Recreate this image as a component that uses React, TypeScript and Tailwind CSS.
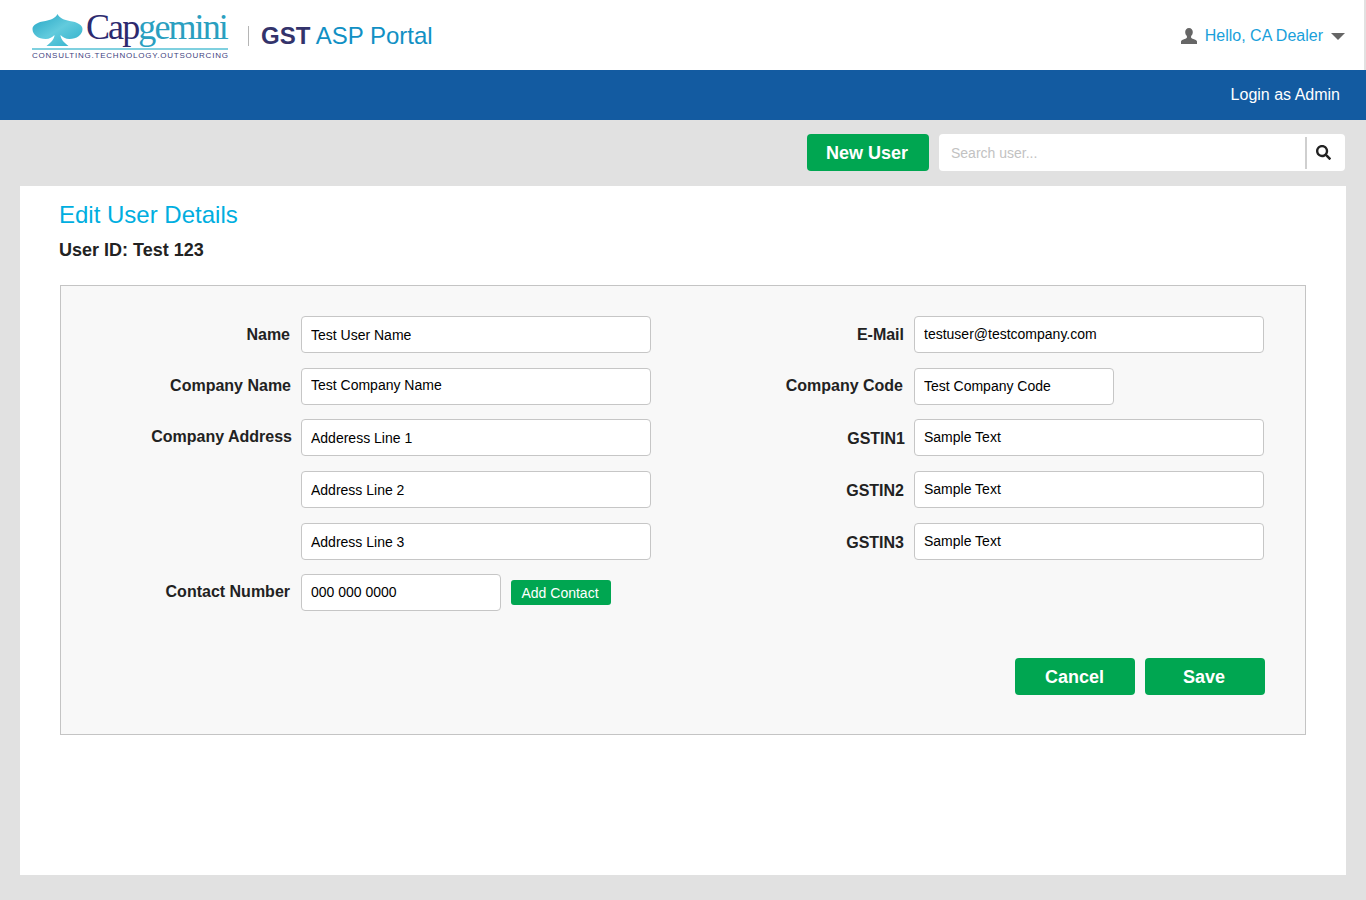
import { FaSearch } from "react-icons/fa";

const FONT = "font-['Liberation_Sans',Arial,sans-serif]";

function Logo() {
  return (
    <div className="flex w-[196px] flex-col pt-[2px]">
      <div className="flex h-[36px] items-end">
        <svg viewBox="0 0 50 32" className="mb-[2px] h-[32px] w-[51px] shrink-0">
          <defs>
            <linearGradient id="spade" x1="0" y1="0" x2="1" y2="1">
              <stop offset="0" stopColor="#23a4c4" />
              <stop offset="0.5" stopColor="#62cbdd" />
              <stop offset="1" stopColor="#2fb0cb" />
            </linearGradient>
          </defs>
          <path
            d="M25 0C27 4 32 6 37 7C45 8 50 11 50 15C50 21 44 25 37 25C33 25 30 23 28 21C28 25 32 29 36 32L14 32C18 29 22 25 22 21C20 23 17 25 13 25C6 25 0 21 0 15C0 11 5 8 13 7C18 6 23 4 25 0Z"
            fill="url(#spade)"
          />
        </svg>
        <div className="mb-[3px] ml-[3px] font-['Liberation_Serif',serif] text-[36px] leading-[36px] tracking-[-1.9px] whitespace-nowrap">
          <span className="text-[#2d2a6f]">Cap</span>
          <span className="text-[#2a9fc0]">gemini</span>
        </div>
      </div>
      <div className="h-[2px] bg-[#7fd0df]" />
      <div className="mt-[1px] text-[8px] leading-[9px] tracking-[0.77px] text-[#3f3f80] whitespace-nowrap">
        CONSULTING.TECHNOLOGY.OUTSOURCING
      </div>
    </div>
  );
}

function Label({ text, className = "" }: { text: string; className?: string }) {
  return (
    <div className="flex h-[37px] items-center justify-end">
      <div className={`text-right text-base font-bold text-[#222] ${className}`}>{text}</div>
    </div>
  );
}

function Field({
  value,
  width = "w-[350px]",
  className = "",
}: {
  value: string;
  width?: string;
  className?: string;
}) {
  return (
    <input
      readOnly
      value={value}
      className={`${width} ${className} ml-[10px] h-[37px] rounded-[4px] border border-[#c6c6c6] bg-white px-[9px] text-sm text-black outline-none`}
    />
  );
}

export default function App() {
  return (
    <div className={`${FONT} min-h-[900px] bg-[#e1e1e1]`}>
      <header className="flex h-[70px] items-center border-r-2 border-[#e1e1e1] bg-white pr-[19px] pl-[32px]">
        <Logo />
        <div className="mt-[2px] mr-[12px] ml-[20px] h-[20px] w-px bg-[#b5b5b5]" />
        <div className="pt-[2px] text-2xl whitespace-nowrap">
          <span className="font-bold text-[#33336b]">GST</span>{" "}
          <span className="text-[#1190c4]">ASP Portal</span>
        </div>
        <div className="ml-auto flex items-center pt-[2px]">
          <svg viewBox="0 0 16 16" className="h-[16px] w-[16px] fill-[#666]">
            <path d="M8 0c2.300 0 3.800 1.700 3.800 4 0 1.800-.8 3.300-1.700 4.100v1.400c0 .6 1 1 2.300 1.500 1.600.6 3.600 1.200 3.600 2.500V16H0v-2.500c0-1.300 2-1.900 3.600-2.500 1.300-.5 2.300-.9 2.300-1.500V8.100C5 7.300 4.200 5.800 4.200 4 4.200 1.700 5.700 0 8 0z" />
          </svg>
          <span className="ml-[8px] text-base text-[#19a0da]">Hello, CA Dealer</span>
          <div className="ml-[8px] h-0 w-0 border-x-[7px] border-t-[7px] border-x-transparent border-t-[#666]" />
        </div>
      </header>

      <div className="flex h-[50px] items-center justify-end bg-[#135ba1] pr-[26px] text-base text-white">
        Login as Admin
      </div>

      <div className="flex h-[66px] items-start justify-end gap-[10px] pt-[14px] pr-[21px]">
        <button className="h-[37px] w-[122px] rounded-[4px] bg-[#00a651] pr-[2px] text-lg font-bold text-white">
          New User
        </button>
        <div className="flex h-[37px] w-[406px] items-center rounded-[4px] bg-white">
          <span className="flex-1 pl-[12px] text-sm text-[#c2c2c2]">Search user...</span>
          <div className="h-[32px] w-[2px] bg-[#cfcfcf]" />
          <div className="flex w-[38px] justify-start pl-[9px]">
            <FaSearch className="text-[15px] text-[#222]" />
          </div>
        </div>
      </div>

      <main className="mx-[20px] h-[689px] bg-white px-[40px]">
        <h1 className="ml-[-1px] pt-[14px] text-2xl leading-[30px] text-[#00aee0]">Edit User Details</h1>
        <div className="mt-[9px] ml-[-1px] text-lg leading-[22px] font-bold text-[#222]">User ID: Test 123</div>

        <section className="mt-[24px] h-[450px] border border-[#c4c4c4] bg-[#f8f8f8] pt-[30px]">
          <div className="grid grid-cols-[230px_360px_253px_360px] grid-rows-[52px_51px_52px_52px_51px_37px] items-start">
            <Label text="Name" className="mr-[1px]" />
            <Field value="Test User Name" />
            <Label text="E-Mail" />
            <Field value="testuser@testcompany.com" className="pb-[2px]" />

            <Label text="Company Name" className="pb-[2px]" />
            <Field value="Test Company Name" className="pb-[4px]" />
            <Label text="Company Code" className="mr-[1px] pb-[2px]" />
            <Field value="Test Company Code" width="w-[200px]" className="pb-[2px]" />

            <Label text="Company Address" className="mr-[-1px] pb-[2px]" />
            <Field value="Adderess Line 1" />
            <Label text="GSTIN1" className="mr-[-1px] pt-[2px]" />
            <Field value="Sample Text" className="pb-[2px]" />

            <div />
            <Field value="Address Line 2" />
            <Label text="GSTIN2" className="pt-[2px]" />
            <Field value="Sample Text" className="pb-[2px]" />

            <div />
            <Field value="Address Line 3" />
            <Label text="GSTIN3" className="pt-[2px]" />
            <Field value="Sample Text" className="pb-[2px]" />

            <Label text="Contact Number" className="mr-[1px] pb-[2px]" />
            <div className="col-span-3 flex items-center">
              <Field value="000 000 0000" width="w-[200px]" className="pb-[2px]" />
              <button className="ml-[10px] h-[25px] w-[100px] rounded-[3px] bg-[#00a651] pr-[2px] text-sm text-white">
                Add Contact
              </button>
            </div>
          </div>

          <div className="mt-[47px] flex justify-end gap-[10px] pr-[40px]">
            <button className="h-[37px] w-[120px] rounded-[4px] bg-[#00a651] pr-[1px] text-lg font-bold text-white">Cancel</button>
            <button className="h-[37px] w-[120px] rounded-[4px] bg-[#00a651] pr-[2px] text-lg font-bold text-white">Save</button>
          </div>
        </section>
      </main>
    </div>
  );
}
